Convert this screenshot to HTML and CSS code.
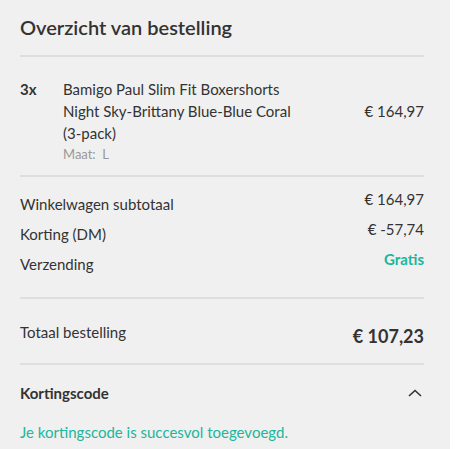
FILE: index.html
```html
<!DOCTYPE html>
<html>

<head>
    <title>Overzicht van bestelling</title>
    <link rel="stylesheet" href="styles.css">
</head>

<body>
    <div class="summary">
        <h2 class="summary-title">Overzicht van bestelling</h2>

        <!-- Products -->
        <div class="section items">
            <div class="item">
                <span class="item-qty">3x</span>
                <div class="item-info">
                    <div class="item-main">
                        <span class="item-name">Bamigo Paul Slim Fit Boxershorts Night Sky-Brittany Blue-Blue Coral (3-pack)</span>
                        <span class="item-price">€ 164,97</span>
                    </div>
                    <div class="item-size">Maat:&nbsp; L</div>
                </div>
            </div>
        </div>

        <!-- Totals -->
        <div class="section totals">
            <div class="row">
                <span>Winkelwagen subtotaal</span>
                <span class="value">€ 164,97</span>
            </div>
            <div class="row">
                <span>Korting (DM)</span>
                <span class="value">€ -57,74</span>
            </div>
            <div class="row">
                <span>Verzending</span>
                <span class="value free">Gratis</span>
            </div>
        </div>

        <div class="section grand">
            <div class="row">
                <span>Totaal bestelling</span>
                <span class="grand-value">€ 107,23</span>
            </div>
        </div>

        <!-- Discount code -->
        <div class="coupon">
            <div class="coupon-head">
                <span>Kortingscode</span>
                <svg class="chevron" width="14" height="8" viewBox="0 0 14 8">
                    <path d="M1 7 L7 1.5 L13 7" fill="none" stroke="#333" stroke-width="1.6" />
                </svg>
            </div>
            <p class="coupon-msg">Je kortingscode is succesvol toegevoegd.</p>
        </div>
    </div>
</body>

</html>
```

FILE: styles.css
```css
body {
    background: white;
    color: #333;
    font-family: Lato, "Open Sans", sans-serif;
    font-size: 15px;
    margin: 0;
    padding: 0;
}

.summary {
    background: #f0f0f0;
    box-sizing: border-box;
    min-height: 100vh;
    padding: 13px 26px 0 20px;
    width: 450px;
}

.summary-title {
    border-bottom: solid 2px #dedede;
    font-size: 20px;
    font-weight: 600;
    line-height: 28px;
    margin: 0;
    padding-bottom: 14px;
}

.section {
    border-bottom: solid 2px #dedede;
}

.items {
    padding: 21px 0 12px;
}

.item {
    display: flex;
}

.item-qty {
    font-weight: bold;
    line-height: 22px;
    width: 43px;
}

.item-info {
    flex: 1;
}

.item-main {
    align-items: center;
    display: flex;
    justify-content: space-between;
}

.item-name {
    line-height: 22px;
    width: 240px;
}

.item-size {
    color: #999;
    font-size: 13px;
    line-height: 18px;
    margin-top: 1px;
}

.totals {
    padding: 12px 0 18px;
}

.row {
    align-items: flex-start;
    display: flex;
    justify-content: space-between;
    line-height: 30px;
}

.value {
    line-height: 20px;
}

.free {
    color: #21b59b;
    font-weight: bold;
}

.grand {
    padding: 22px 0 12px;
}

.grand .row span:first-child {
    line-height: 22px;
}

.grand-value {
    font-size: 18px;
    font-weight: bold;
}

.coupon {
    padding-top: 17px;
}

.coupon-head {
    align-items: center;
    display: flex;
    font-weight: bold;
    justify-content: space-between;
    line-height: 22px;
}

.chevron {
    margin-right: 2px;
}

.coupon-msg {
    color: #21b59b;
    line-height: 22px;
    margin: 17px 0 0;
}
```
